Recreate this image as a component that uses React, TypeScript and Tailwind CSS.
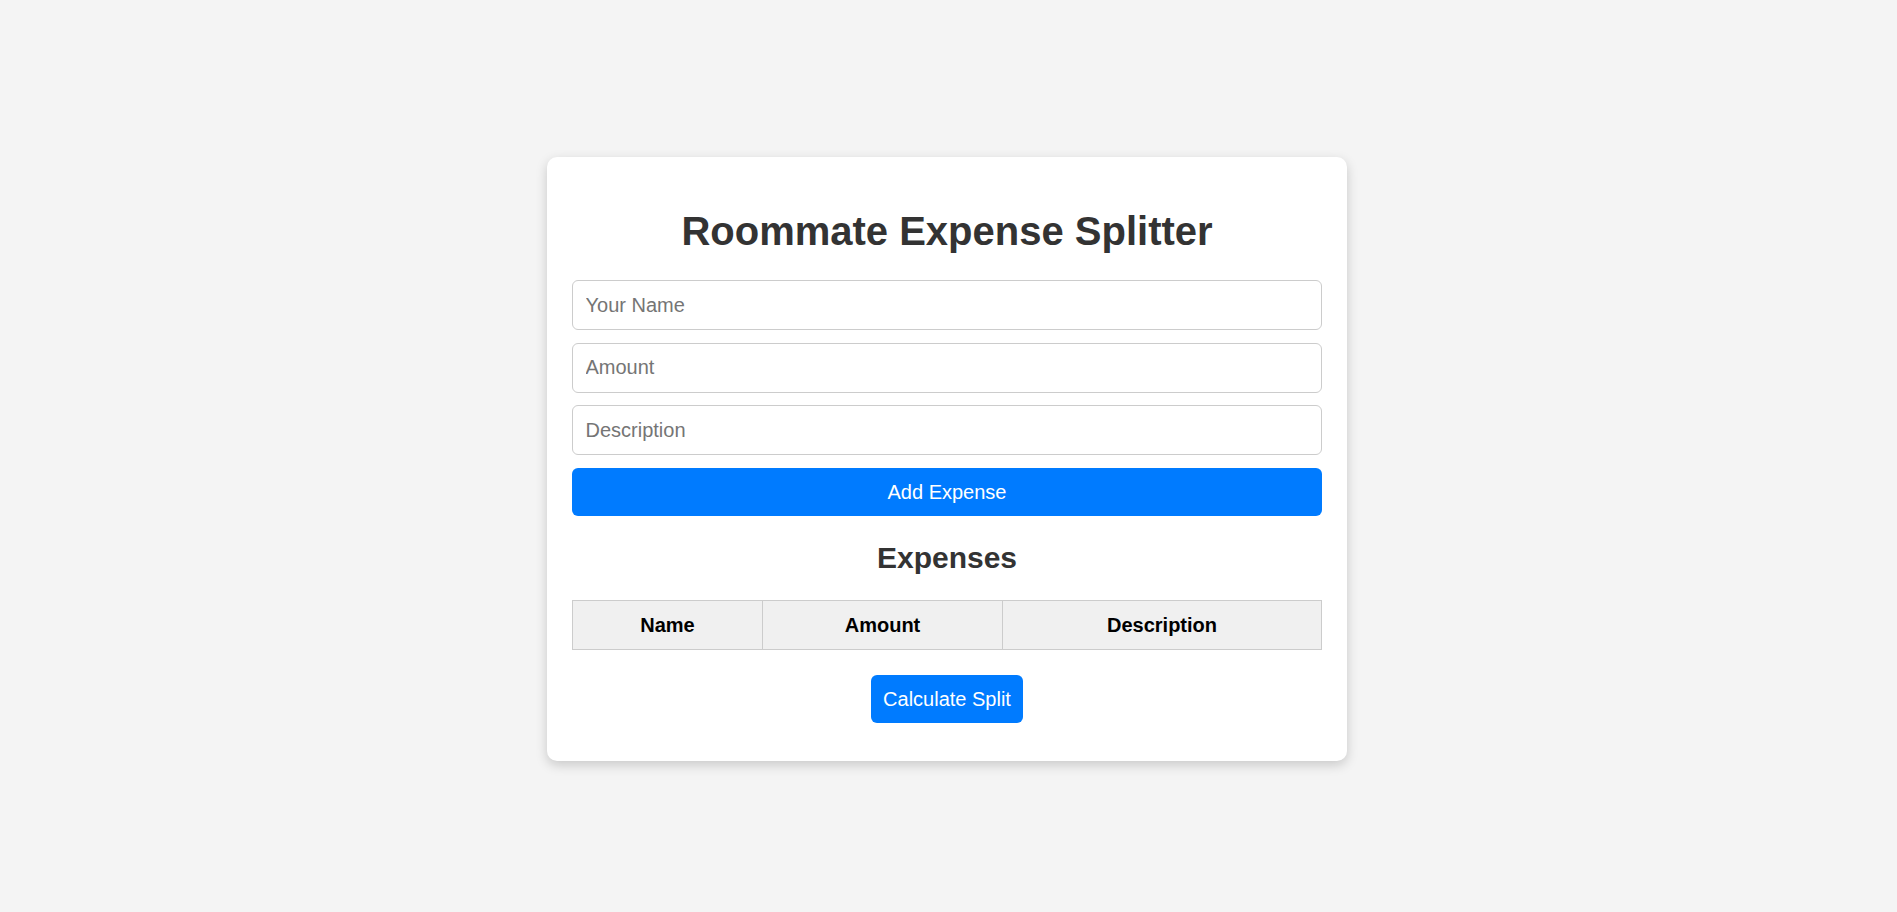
import type { FC } from "react";

const fields = [ "Your Name", "Amount", "Description" ];

const ExpenseForm: FC = () => {
    return (
        <div className="flex flex-col gap-[12.5px]">
            {
                fields.map( ( label ) => (
                    <input
                        key={ label }
                        type="text"
                        placeholder={ label }
                        className="w-full h-[50px] px-[12.5px] border-[1.25px] border-[#cccccc] rounded-[6px] text-[20px] text-[#333] placeholder:text-[#757575] outline-none"
                    />
                ) )
            }
            <button className="w-full h-[48px] bg-[#007bff] text-white text-[20px] rounded-[6px]">
                Add Expense
            </button>
        </div>
    );
};

const ExpenseTable: FC = () => {
    return (
        <table className="w-full border-collapse">
            <thead>
                <tr className="bg-[#f0f0f0]">
                    <th className="w-[190px] h-[49px] border-[1.25px] border-[#cccccc] text-[20px] font-bold text-black">Name</th>
                    <th className="w-[240px] h-[49px] border-[1.25px] border-[#cccccc] text-[20px] font-bold text-black">Amount</th>
                    <th className="h-[49px] border-[1.25px] border-[#cccccc] text-[20px] font-bold text-black">Description</th>
                </tr>
            </thead>
            <tbody></tbody>
        </table>
    );
};

export default function App() {
    return (
        <div className="min-h-screen bg-[#f4f4f4] pt-[157px] pr-[3px] flex justify-center items-start font-['Liberation_Sans',Arial,sans-serif]">
            <div className="w-[800px] bg-white rounded-[10px] shadow-[0_4px_12px_rgba(0,0,0,0.18)] px-[25px] pt-[25px] pb-[38px]">
                <h1 className="text-[40px] leading-[46px] font-bold text-[#333] text-center mt-[26px] mb-[26px]">
                    Roommate Expense Splitter
                </h1>
                <ExpenseForm />
                <h2 className="text-[30px] leading-[34.5px] font-bold text-[#333] text-center mt-[25px] mb-[25px]">
                    Expenses
                </h2>
                <ExpenseTable />
                <div className="flex justify-center mt-[25px]">
                    <button className="h-[48px] px-[12.5px] bg-[#007bff] text-white text-[20px] rounded-[6px]">
                        Calculate Split
                    </button>
                </div>
            </div>
        </div>
    );
}
